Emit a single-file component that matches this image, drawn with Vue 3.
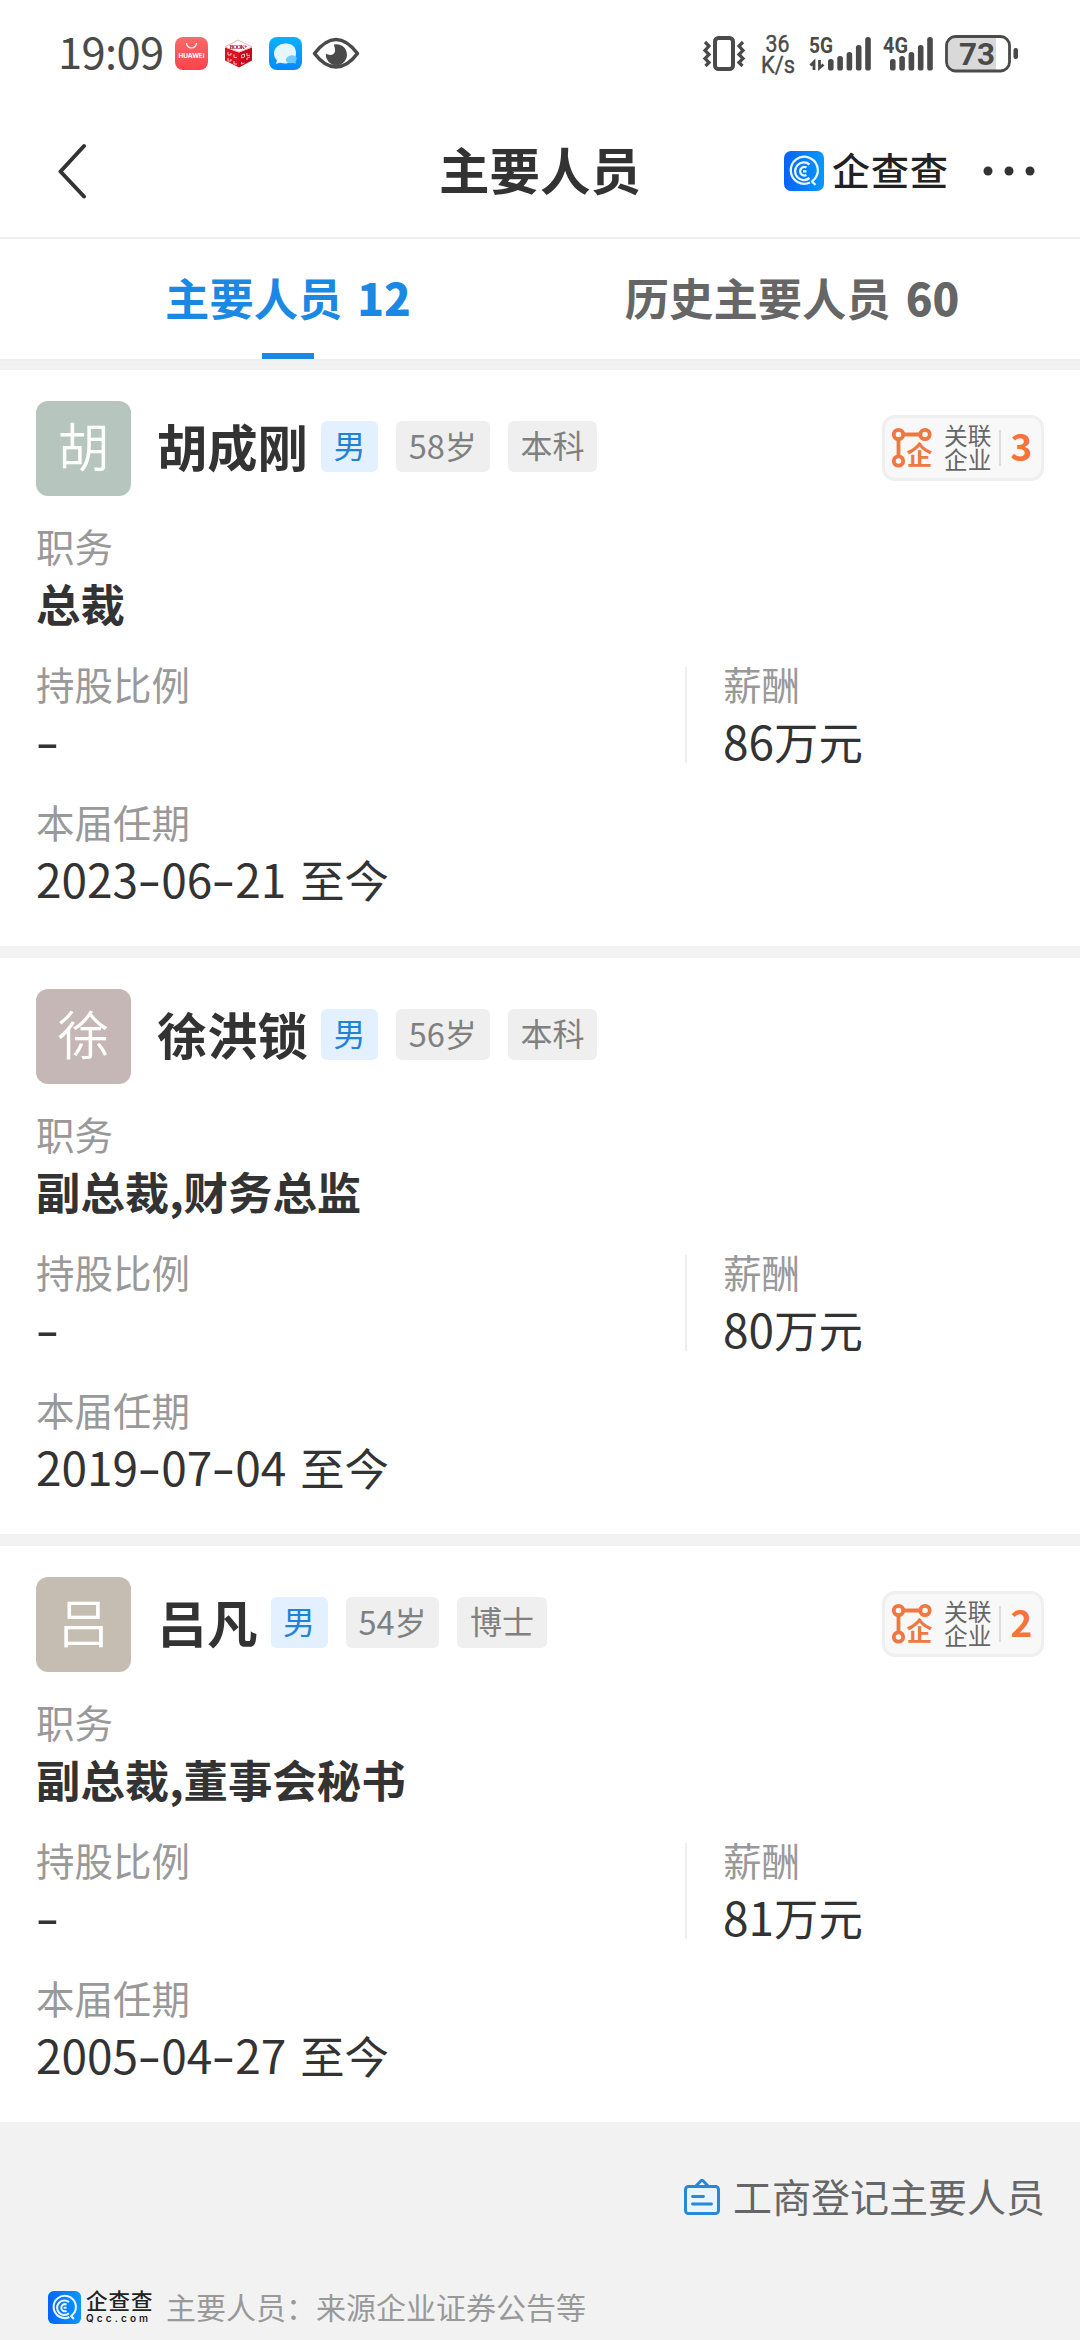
<script setup>
const tabs = [
  { label: '主要人员', count: '12', active: true },
  { label: '历史主要人员', count: '60', active: false },
]

const people = [
  { name: '胡成刚', tone: 'green', age: '58岁', degree: '本科', linked: '3', post: '总裁', share: '-', pay: '86万元', term: '2023-06-21 至今' },
  { name: '徐洪锁', tone: 'rose', age: '56岁', degree: '本科', linked: '', post: '副总裁,财务总监', share: '-', pay: '80万元', term: '2019-07-04 至今' },
  { name: '吕凡', tone: 'sand', age: '54岁', degree: '博士', linked: '2', post: '副总裁,董事会秘书', share: '-', pay: '81万元', term: '2005-04-27 至今' },
]

const bars = [
  { x: 0, y: 22 },
  { x: 9.3, y: 19 },
  { x: 18.6, y: 15 },
  { x: 27.9, y: 8 },
  { x: 37.2, y: 0 },
]

// Splits a string into digit, hyphen, space and plain runs so each can be sized on its own.
function runs(text) {
  return text.match(/\d+|-|\s+|[^\d\s-]+/g).map((t) => ({
    t,
    kind: /\d/.test(t) ? 'num' : t === '-' ? 'dash' : /\s/.test(t) ? 'gap' : 'han',
  }))
}
</script>

<template>
  <div class="screen">
    <header class="status">
      <span class="clock">19:09</span>
      <svg class="apps" width="186" height="38" viewBox="0 0 186 38">
        <defs>
          <linearGradient id="hw" x1="0" y1="0" x2="0" y2="1">
            <stop offset="0" stop-color="#fb6a68" /><stop offset="1" stop-color="#f8434f" />
          </linearGradient>
          <linearGradient id="msg" x1="0" y1="0" x2="0" y2="1">
            <stop offset="0" stop-color="#08b2fb" /><stop offset="1" stop-color="#0a86fb" />
          </linearGradient>
        </defs>
        <rect x="1" y="2" width="33" height="33" rx="8" fill="url(#hw)" />
        <path d="M12.5 8a5 5 0 0 0 10 0" fill="none" stroke="#fff" stroke-width="1.2" />
        <text x="17.5" y="23" text-anchor="middle" class="tiny" textLength="26">HUAWEI</text>
        <path d="M51 12.5l14 5v15l-14-7z" fill="#dc1222" />
        <path d="M65 17.5l13-5v13l-13 7z" fill="#c60818" />
        <path d="M51 12l13-7 14 7-13 5z" fill="#fff" stroke="#e9a0a4" stroke-width=".8" />
        <text x="64.500" y="13.500" text-anchor="middle" class="book" textLength="18">BOOK+</text>
        <path d="M54 17v3h3v-2M60 19.500v3h3M54 23v3h3v-2M60 26v3h3M67.500 20v3l3-1v-3zM73 18v3l3-1M67.500 27v2l3-1M73 25v-2l3-1" fill="none" stroke="#fff" stroke-width="1" opacity=".75" />
        <rect x="95" y="2" width="33" height="33" rx="8" fill="url(#msg)" />
        <path d="M111 8.500a11 10 0 1 0 0 20c3 0 11-2 11-10s-5-10-11-10z" fill="#e6f6ff" />
        <path d="M103 25l-1 4 6-2z" fill="#e6f6ff" />
        <path d="M112 26a6 5 0 0 1 9-5c3 2 1.500 4 .5 5.500l.5 2-3-.5c-4 .5-7-.5-7-2z" fill="#6fcafb" />
        <path d="M140.500 18.500C147 10 154 4.500 162 4.500s15 5.500 21.500 14C177 27 170 32 162 32s-15-5-21.500-13.500z" fill="none" stroke="#4a4a4a" stroke-width="3.600" stroke-linejoin="round" />
        <path d="M160 9.500a10.500 10.500 0 1 1-8 9c2 2 8 2.500 9-2 .6-3-1-5-1-7z" fill="#4a4a4a" />
      </svg>
      <svg class="signals" width="318" height="56" viewBox="702 28 318 56">
        <g fill="none" stroke="#4a4a4a">
          <rect x="715" y="38" width="18" height="31" rx="3.500" stroke-width="4" />
          <path d="M705 42l4 4-4 4.500 4 4-4 4 4 4-3.500 3.500M743 42l-4 4 4 4.500-4 4 4 4-4 4 3.500 3.500" stroke-width="3.200" />
        </g>
        <text x="777.500" y="52" text-anchor="middle" class="rate" textLength="24" lengthAdjust="spacingAndGlyphs">36</text>
        <text x="778" y="72.500" text-anchor="middle" class="rate" textLength="34" lengthAdjust="spacingAndGlyphs">K/s</text>
        <text x="809" y="53" class="net" textLength="24" lengthAdjust="spacingAndGlyphs">5G</text>
        <text x="883" y="53" class="net" textLength="25" lengthAdjust="spacingAndGlyphs">4G</text>
        <path d="M814 70V62l-3.500 3.500M819.500 60v8l4-3.500" fill="none" stroke="#4a4a4a" stroke-width="2.800" />
        <g v-for="x in [828, 890]" :key="x" fill="#4a4a4a">
          <rect v-for="b in bars" :key="b.x" :x="x + b.x" :y="37 + b.y" width="5.600" :height="33.500 - b.y" rx="2.600" />
        </g>
        <path d="M955 38h41v32h-41a7 7 0 0 1-7-7v-18a7 7 0 0 1 7-7z" fill="#d9d9d9" />
        <rect x="946.500" y="36.500" width="63" height="34.500" rx="9" fill="none" stroke="#4a4a4a" stroke-width="2.800" />
        <rect x="1013.500" y="48" width="4.500" height="11" rx="2" fill="#4a4a4a" />
        <text x="977" y="65" text-anchor="middle" class="level" textLength="36" lengthAdjust="spacingAndGlyphs">73</text>
      </svg>
    </header>

    <nav class="nav">
      <svg class="back" width="32" height="56" viewBox="0 0 32 56">
        <path d="M29 3L5.500 28.500l23.500 25" fill="none" stroke="#333" stroke-width="4" stroke-linecap="round" stroke-linejoin="round" />
      </svg>
      <h1>主要人员</h1>
      <div class="brand">
        <svg width="40" height="40" viewBox="0 0 40 40">
          <defs>
            <linearGradient id="qcc" x1="0" y1="0" x2="1" y2="0">
              <stop offset="0" stop-color="#0563fb" /><stop offset="1" stop-color="#0898fc" />
            </linearGradient>
          </defs>
          <rect width="40" height="40" rx="7" fill="url(#qcc)" />
          <g fill="none" stroke="#e8f6ff" stroke-width="2.300">
            <path d="M26 31.500A13.500 13.500 0 1 1 31 27.500L28 30.500" />
            <path d="M27.500 30l4 4" />
            <path d="M25.500 13.500a8.800 8.800 0 1 0 0 13.500" />
            <path d="M22.500 16.500a4.300 4.300 0 1 0 0 7.500M19 20.300h3.500" />
          </g>
        </svg>
        <span>企查查</span>
      </div>
      <svg class="more" width="56" height="12" viewBox="0 0 56 12" fill="#333">
        <circle cx="7" cy="6" r="4.500" /><circle cx="28" cy="6" r="4.500" /><circle cx="49" cy="6" r="4.500" />
      </svg>
    </nav>

    <div class="tabs">
      <div v-for="t in tabs" :key="t.label" class="tab" :class="{ active: t.active }">
        <span>{{ t.label }} <b>{{ t.count }}</b></span>
      </div>
    </div>

    <main>
      <section v-for="p in people" :key="p.name" class="card">
        <div class="head">
          <div class="avatar" :class="p.tone">{{ p.name[0] }}</div>
          <h2>{{ p.name }}</h2>
          <span class="tag sex">男</span>
          <span class="tag"><i v-for="(r, i) in runs(p.age)" :key="i" :class="r.kind">{{ r.t }}</i></span>
          <span class="tag">{{ p.degree }}</span>
          <div v-if="p.linked" class="linked">
            <svg width="42" height="42" viewBox="0 0 42 42">
              <g fill="none" stroke="#ee7840" stroke-width="3.800">
                <circle cx="7.500" cy="7.500" r="4.700" /><circle cx="34" cy="7.500" r="4.700" /><circle cx="7.500" cy="34" r="4.700" />
                <path d="M12 7.500h17.500M7.500 12v17.500" />
              </g>
              <text x="28.500" y="38.300" text-anchor="middle" class="ent">企</text>
            </svg>
            <div class="linked-label"><span>关联</span><span>企业</span></div>
            <strong>{{ p.linked }}</strong>
          </div>
        </div>

        <div class="field">
          <div class="label">职务</div>
          <div class="value bold">{{ p.post }}</div>
        </div>
        <div class="pair">
          <div class="field share">
            <div class="label">持股比例</div>
            <div class="value"><i class="dash">{{ p.share }}</i></div>
          </div>
          <div class="rule"></div>
          <div class="field">
            <div class="label">薪酬</div>
            <div class="value"><i v-for="(r, i) in runs(p.pay)" :key="i" :class="r.kind">{{ r.t }}</i></div>
          </div>
        </div>
        <div class="field">
          <div class="label">本届任期</div>
          <div class="value"><i v-for="(r, i) in runs(p.term)" :key="i" :class="r.kind">{{ r.t }}</i></div>
        </div>
      </section>
    </main>

    <footer>
      <div class="registry">
        <svg width="38" height="38" viewBox="0 0 38 38" fill="none" stroke="#2a86d6" stroke-width="3" stroke-linecap="round" stroke-linejoin="round">
          <rect x="2.500" y="8.500" width="33" height="27" rx="3" fill="#eaf4fd" />
          <path d="M13 8l5-5.200q1-.8 2 0L25 8" />
          <path d="M9.500 18.500h11M9.500 26h19" stroke-width="2.800" />
        </svg>
        <span>工商登记主要人员</span>
      </div>
      <div class="source">
        <svg width="33" height="33" viewBox="0 0 40 40">
          <rect width="40" height="40" rx="7" fill="url(#qcc)" />
          <g fill="none" stroke="#e8f6ff" stroke-width="2.500">
            <path d="M26 31.500A13.500 13.500 0 1 1 31 27.500L28 30.500" />
            <path d="M27.500 30l4 4" />
            <path d="M25.500 13.500a8.800 8.800 0 1 0 0 13.500" />
            <path d="M22.500 16.500a4.300 4.300 0 1 0 0 7.500M19 20.300h3.500" />
          </g>
        </svg>
        <div class="mark"><span class="mark-name">企查查</span><span class="mark-site">Qcc.com</span></div>
        <span class="note">主要人员：来源企业证券公告等</span>
      </div>
    </footer>
  </div>
</template>

<style>
body {
  margin: 0;
  background: #f2f2f2;
}
</style>

<style scoped>
.screen {
  width: 1080px;
  height: 2340px;
  overflow: hidden;
  background: #f2f2f2;
  color: #333;
  font-family: "Noto Sans CJK SC", "Noto Sans", sans-serif;
}
i { font-style: normal; }

.status {
  display: flex;
  align-items: flex-start;
  height: 108px;
  padding: 0 60px 0 58px;
  box-sizing: border-box;
  background: #fff;
}
.clock {
  width: 116px;
  margin-top: 19px;
  line-height: 64px;
  font-size: 43.5px;
  letter-spacing: -0.6px;
  color: #4a4a4a;
  white-space: nowrap;
}
.apps { margin-top: 35px; }
.signals { margin: 28px 0 0 auto; }
.tiny { font: 700 6.5px "Inter", sans-serif; fill: #fff; }
.book { font: 700 6px "Liberation Serif", serif; fill: #a01420; }
.rate { font: 400 23.5px "Roboto", sans-serif; fill: #4a4a4a; stroke: #4a4a4a; stroke-width: 0.4px; }
.net { font: 700 21.5px "Roboto", sans-serif; fill: #4a4a4a; }
.level { font: 700 32px "Roboto", sans-serif; fill: #4a4a4a; }

.nav {
  display: flex;
  align-items: center;
  height: 131px;
  padding: 0 43px 4px 55px;
  box-sizing: border-box;
  background: #fff;
  border-bottom: 2px solid #eee;
}
h1 {
  margin: -6px 0 0 352px;
  width: 204px;
  font-size: 50.5px;
  line-height: 72px;
  font-weight: 700;
  white-space: nowrap;
}
.brand {
  display: flex;
  align-items: center;
  margin-left: 141px;
  gap: 8px;
}
.brand span {
  width: 120px;
  margin-top: -3px;
  font-size: 38px;
  line-height: 50px;
  letter-spacing: 1px;
  font-weight: 500;
  color: #222;
  white-space: nowrap;
}
.more { margin-left: auto; }

.tabs {
  display: flex;
  height: 120px;
  padding: 0 36px;
  background: #fff;
  border-bottom: 2px solid #eee;
}
.tab {
  position: relative;
  flex: 1;
  text-align: center;
  font-size: 44.3px;
  line-height: 117px;
  font-weight: 700;
  color: #666;
}
.tab b { font-size: 44px; margin-left: 5px; }
.tab.active { color: #1b88e4; }
.tab.active::after {
  content: "";
  position: absolute;
  left: 50%;
  bottom: 0;
  width: 52px;
  height: 6px;
  margin-left: -26px;
  background: #1b88e4;
}

main {
  display: flex;
  flex-direction: column;
  gap: 12px;
  padding-top: 9px;
}
.card {
  height: 576px;
  padding: 30px 36px 0;
  box-sizing: border-box;
  background: #fff;
}
.head {
  display: flex;
  align-items: center;
  height: 96px;
  margin-bottom: 23px;
}
.avatar {
  width: 95px;
  height: 95px;
  border-radius: 12px;
  text-align: center;
  font-size: 52px;
  line-height: 88px;
  font-weight: 350;
  color: #fff;
}
.green { background: #b6c5be; }
.rose { background: #c6b7b7; }
.sand { background: #c6bdb2; }
h2 {
  margin: -6px 13px 0 26px;
  font-size: 50.3px;
  line-height: 72px;
  font-weight: 700;
}
.tag {
  height: 51px;
  margin: 0 18px 3px 0;
  padding: 0 12.8px;
  border-radius: 6px;
  background: #efefef;
  color: #808080;
  font-size: 32px;
  line-height: 47px;
}
.tag .num { font-size: 32.5px; }
.sex { background: #e2f0ff; color: #1f83d8; padding: 0 12.5px; }
.linked {
  display: flex;
  align-items: center;
  width: 162px;
  height: 66px;
  margin-left: auto;
  padding-left: 6px;
  box-sizing: border-box;
  border: 3px solid #efefef;
  border-radius: 13px;
  background: #f8f8f8;
}
.ent { font: 700 26px "Noto Sans CJK SC", sans-serif; fill: #ee7840; }
.linked-label {
  display: flex;
  flex-direction: column;
  margin: -3px 0 0 11px;
  padding-right: 8px;
  font-size: 23.7px;
  line-height: 24px;
  color: #666;
}
.linked strong {
  height: 36px;
  padding-left: 9px;
  border-left: 2px solid #ddd;
  font-size: 37px;
  line-height: 31px;
  font-weight: 700;
  color: #f6733a;
}

.field + .pair, .pair + .field { margin-top: 24px; }
.label {
  height: 56px;
  line-height: 52px;
  font-size: 38.5px;
  color: #999;
}
.value {
  height: 58px;
  line-height: 55px;
  font-size: 44.4px;
  white-space: pre;
}
.bold { font-weight: 700; }
.num { font-size: 46px; }
.dash {
  display: inline-block;
  width: 23px;
  text-align: center;
  font-family: "Inter", sans-serif;
  font-size: 44px;
  transform: scaleX(1.25);
}
.gap { letter-spacing: 4px; }
.pair { display: flex; }
.share { width: 649px; }
.rule {
  width: 2px;
  height: 96px;
  margin: 10px 36px 0 0;
  background: #eee;
}

.registry {
  display: flex;
  align-items: center;
  justify-content: flex-end;
  gap: 12px;
  height: 150px;
  padding-right: 35px;
  font-size: 39px;
  color: #666;
}
.registry span { line-height: 56px; margin-top: -5px; }
.source {
  display: flex;
  align-items: center;
  height: 34px;
  padding: 18px 0 0 48px;
}
.mark {
  display: flex;
  flex-direction: column;
  width: 80px;
  margin: -2px 0 0 5px;
  color: #222;
}
.mark-name { font-size: 21.5px; line-height: 22px; letter-spacing: 1px; font-weight: 500; }
.mark-site { font: 600 10px/11px "Inter", sans-serif; letter-spacing: 3.1px; margin-top: 2px; }
.note { font-size: 30px; line-height: 34px; margin-top: -3px; color: #999; }
</style>
